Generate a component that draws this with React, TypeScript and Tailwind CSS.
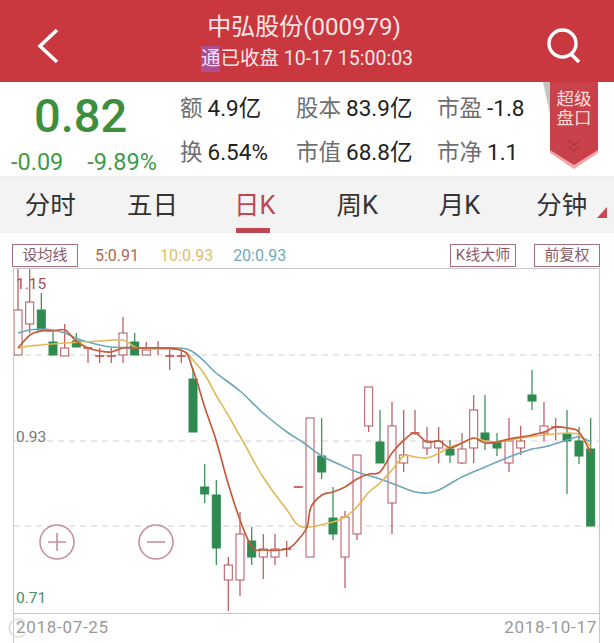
import React from 'react';

type Candle = [x: number, wickTop: number, wickBottom: number, bodyTop: number, bodyBottom: number, kind: 'up' | 'down'];

const candles: Candle[] = [
  [18, 268, 355, 310, 355, 'up'],
  [29.7, 268, 333, 302, 324, 'up'],
  [41.3, 293, 332, 310, 330, 'down'],
  [53, 332, 355, 342, 355, 'down'],
  [64.7, 324, 356, 348, 356, 'up'],
  [76.3, 333, 347, 341, 347, 'down'],
  [88, 347, 363, 348, 349, 'up'],
  [99.7, 348, 363, 356, 357, 'up'],
  [111.3, 348, 363, 356, 357, 'up'],
  [123, 317, 363, 333, 355, 'up'],
  [134.7, 333, 355, 342, 355, 'down'],
  [146.3, 342, 355, 350, 355, 'up'],
  [158, 341, 355, 348, 349, 'up'],
  [169.7, 348, 370, 356, 357, 'up'],
  [181.3, 350, 363, 356, 357, 'up'],
  [193, 368, 432, 379, 432, 'down'],
  [204.7, 464, 503, 487, 494, 'down'],
  [216.3, 480, 565, 495, 548, 'down'],
  [228.3, 557, 611, 565, 580, 'up'],
  [240, 512, 596, 534, 580, 'up'],
  [251.7, 527, 565, 541, 557, 'down'],
  [263.3, 534, 579, 549, 557, 'up'],
  [275, 534, 565, 549, 557, 'up'],
  [286.7, 541, 557, 549, 550, 'up'],
  [298.3, 487, 488, 487, 488, 'up'],
  [310, 418, 557, 418, 557, 'up'],
  [321.7, 418, 479, 456, 472, 'down'],
  [333, 487, 540, 518, 534, 'down'],
  [345, 511, 588, 517, 557, 'up'],
  [357, 455, 540, 455, 534, 'up'],
  [368.7, 387, 432, 387, 426, 'up'],
  [380, 410, 463, 442, 463, 'down'],
  [392, 402, 534, 426, 503, 'up'],
  [403.7, 410, 472, 455, 463, 'up'],
  [415, 410, 435, 433, 434, 'up'],
  [427, 427, 455, 441, 448, 'up'],
  [438.7, 427, 463, 441, 448, 'up'],
  [450, 440, 463, 449, 455, 'down'],
  [462, 433, 464, 449, 463, 'up'],
  [473.7, 395, 463, 410, 448, 'up'],
  [485, 395, 450, 433, 440, 'down'],
  [497, 433, 456, 442, 448, 'down'],
  [509, 418, 472, 441, 463, 'up'],
  [520.7, 426, 455, 441, 448, 'up'],
  [532, 370, 410, 395, 401, 'down'],
  [544, 402, 441, 426, 433, 'up'],
  [555.7, 418, 440, 427, 428, 'up'],
  [567, 410, 494, 434, 441, 'down'],
  [579, 427, 464, 441, 456, 'down'],
  [590.7, 418, 526, 449, 526, 'down'],
];

const ma5 =
  '18,348 30,335 41,331 53,331 65,330 76,341 88,348 100,351 111,352 123,348 135,348 181,350 193,370 205,408 216,440 228,483 240,520 252,547 263,550 287,549 298,540 307,527 311,507 322,495 333,492 345,487 357,479 369,474 380,472 392,453 404,440 415,433 427,442 439,441 450,448 462,443 474,438 485,443 497,442 509,439 521,437 532,435 544,432 556,427 567,428 579,432 591,453';
const ma10 =
  '18,348 30,346 41,345 65,343 100,341 123,340 135,347 147,349 181,350 193,360 205,375 216,395 228,415 245,445 263,477 287,510 302,527 333,522 345,517 357,507 369,492 380,483 392,470 404,456 415,457 427,458 439,453 450,447 462,443 474,438 485,441 497,442 521,438 544,435 567,433 579,435 591,447';
const ma20 =
  '18,333 30,330 41,329 53,330 65,333 76,338 88,342 111,347 146,348 181,348 193,352 205,362 216,373 240,391 263,413 287,432 304,443 322,456 345,467 357,472 380,479 404,488 415,492 427,493 439,490 462,477 485,467 509,457 532,449 544,447 567,440 579,437 591,442';

// catmull-rom through the sampled points, the averages are smooth in the app
const smooth = (points: string) => {
  const p = points.split(' ').map((s) => s.split(',').map(Number));
  let d = `M${p[0][0]} ${p[0][1]}`;
  for (let i = 0; i < p.length - 1; i++) {
    const a = p[Math.max(i - 1, 0)];
    const b = p[i];
    const c = p[i + 1];
    const e = p[Math.min(i + 2, p.length - 1)];
    const c1x = b[0] + (c[0] - a[0]) / 6;
    const c1y = b[1] + (c[1] - a[1]) / 6;
    const c2x = c[0] - (e[0] - b[0]) / 6;
    const c2y = c[1] - (e[1] - b[1]) / 6;
    d += ` C${c1x} ${c1y} ${c2x} ${c2y} ${c[0]} ${c[1]}`;
  }
  return d;
};

const wickUp = '#b5545c';
const bodyDown = '#2f8a4f';

const stats = [
  [['额', '4.9亿'], ['股本', '83.9亿'], ['市盈', '-1.8']],
  [['换', '6.54%'], ['市值', '68.8亿'], ['市净', '1.1']],
];

const tabs = ['分时', '五日', '日K', '周K', '月K', '分钟'];

const Header = () => (
  <header className="relative flex h-[82px] flex-col items-center bg-[#c9373f] text-white">
    <svg className="absolute left-[36px] top-[27px]" width="25" height="38" viewBox="0 0 25 38" fill="none">
      <path d="M21 3 L4 19 L21 35" stroke="#fff" strokeWidth="3.6" />
    </svg>
    <div className="mt-[12px] pr-[6px] text-[24px] leading-[30px] text-[#f6e6e6]">中弘股份(000979)</div>
    <div className="mt-[4px] flex items-center text-[19.5px] leading-[26px] text-[#f6e6e6]">
      <span className="bg-[#9a5fc4]/60 text-[#f0e0ff]">通</span>
      <span>已收盘 10-17 15:00:03</span>
    </div>
    <svg className="absolute left-[544px] top-[26px]" width="40" height="40" viewBox="0 0 40 40" fill="none">
      <circle cx="18.5" cy="17.5" r="13.5" stroke="#fff" strokeWidth="3.4" />
      <path d="M27 28 L35 36" stroke="#fff" strokeWidth="3.8" />
    </svg>
  </header>
);

const Ribbon = () => (
  <div className="absolute left-[543px] top-0 h-[88px] w-[56px]">
    <svg className="absolute inset-0" width="56" height="88" viewBox="0 0 56 88">
      <path d="M0 0 L7 0 L7 32 Z" fill="#c4c4c4" />
      <path d="M7 0 L55 0 L55 71 L31 87 L7 71 Z" fill="#f2a5a5" />
      <path d="M7 0 L55 0 L55 68 L31 83 L7 68 Z" fill="#c9414a" />
      <path d="M25 58 L31 63 L37 58 M25 64 L31 69 L37 64" stroke="#a93a42" strokeWidth="1.4" fill="none" />
    </svg>
    <div className="absolute left-[7px] top-[8px] w-[48px] text-center text-[17.5px] leading-[19px] text-[#f8dcdc]">
      <div>超级</div>
      <div>盘口</div>
    </div>
  </div>
);

const Stats = () => (
  <section className="relative flex h-[94px] bg-white">
    <div className="flex w-[180px] flex-col">
      <div className="mt-[6px] pl-[34px] text-[47px] font-medium leading-[56px] text-[#3d8f3d]">0.82</div>
      <div className="mt-[5px] flex gap-[24px] pl-[11px] text-[23.5px] leading-[26px] text-[#3f9a4a]">
        <span>-0.09</span>
        <span>-9.89%</span>
      </div>
    </div>
    <div className="flex flex-col gap-[14px] pt-[11px]">
      {stats.map((row) => (
        <div key={row[0][0]} className="flex h-[30px] items-center text-[22.5px] leading-[30px]">
          {row.map(([label, value], i) => (
            <div key={label} className={i === 0 ? 'w-[116px]' : i === 1 ? 'w-[141px]' : 'w-[90px]'}>
              <span className="text-[#6f6f6f]">{label}</span>
              <span className="ml-[5px] text-[22.5px] text-[#222]">{value}</span>
            </div>
          ))}
        </div>
      ))}
    </div>
    <Ribbon />
  </section>
);

const Tabs = () => (
  <nav className="relative grid h-[57px] grid-cols-6 border-t border-[#ededed] bg-[#f3f3f3]">
    {tabs.map((tab) => {
      const active = tab === '日K';
      return (
        <div key={tab} className="relative flex items-start justify-center pt-[11px] pr-[2px]">
          <span className={`text-[25.5px] leading-[34px] ${active ? 'text-[#c0474f]' : 'text-[#333]'}`}>{tab}</span>
          {active && <span className="absolute bottom-0 left-[31px] h-[5px] w-[34px] bg-[#c0474f]" />}
        </div>
      );
    })}
    <svg className="absolute left-[596px] top-[30px]" width="12" height="11" viewBox="0 0 12 11">
      <path d="M1 11 L11 0 L11 11 Z" fill="#c9474f" />
    </svg>
  </nav>
);

const ToolButton = ({ label, className = '' }: { label: string; className?: string }) => (
  <div
    className={`flex h-[23px] w-[66px] items-center justify-center border border-[#a8707f] text-[15px] leading-none text-[#8a5a68] ${className}`}
  >
    {label}
  </div>
);

const Toolbar = () => (
  <div className="flex h-[35px] items-start bg-white pl-[12px] pt-[11px]">
    <ToolButton label="设均线" />
    <div className="flex h-[23px] items-center text-[16px]">
      <span className="ml-[17px] text-[#b0674f]">5:0.91</span>
      <span className="ml-[21px] text-[#dcc06a]">10:0.93</span>
      <span className="ml-[20px] text-[#6fa9bd]">20:0.93</span>
    </div>
    <ToolButton label="K线大师" className="ml-auto" />
    <ToolButton label="前复权" className="ml-[18px] mr-[14px]" />
  </div>
);

const ZoomButton = ({ minus = false }: { minus?: boolean }) => (
  <svg width="36" height="36" viewBox="0 0 36 36" fill="none" stroke="#c98f9c" strokeWidth="1.6">
    <circle cx="18" cy="18" r="17" />
    <path d={minus ? 'M9 18 H27' : 'M9 18 H27 M18 9 V27'} />
  </svg>
);

const KChart = () => (
  <svg className="block" width="585" height="344" viewBox="14 269 585 344" fill="none">
    {[355, 441, 526].map((y) => (
      <line key={y} x1="14" x2="599" y1={y} y2={y} stroke="#d4d0d0" strokeWidth="1" strokeDasharray="6 5" />
    ))}
    {candles.map(([x, wickTop, wickBottom, bodyTop, bodyBottom, kind]) => {
      const up = kind === 'up';
      const color = up ? wickUp : bodyDown;
      const dash = bodyBottom - bodyTop <= 1;
      return (
        <g key={x}>
          <line x1={x} x2={x} y1={wickTop} y2={wickBottom} stroke={color} strokeWidth="1.2" />
          {dash ? (
            <line x1={x - 4.5} x2={x + 4.5} y1={bodyTop} y2={bodyTop} stroke="#c9483f" strokeWidth="1.6" />
          ) : (
            <rect
              x={x - 4}
              y={bodyTop}
              width="8"
              height={bodyBottom - bodyTop}
              fill={up ? '#fff' : bodyDown}
              stroke={color}
              strokeWidth="1"
            />
          )}
        </g>
      );
    })}
    <path d={smooth(ma20)} stroke="#6ba6bd" strokeWidth="1.6" />
    <path d={smooth(ma10)} stroke="#e0ba55" strokeWidth="1.6" />
    <path d={smooth(ma5)} stroke="#c45c3c" strokeWidth="1.7" />
  </svg>
);

const Chart = () => (
  <section className="relative ml-[13px] mr-[14px] h-[375px] border-x border-t border-[#c9c7cc] bg-white">
    <KChart />
    <div className="h-px bg-[#c9c7cc]" />
    <span className="absolute left-[2px] top-[6px] text-[15.5px] leading-[18px] text-[#a5505a]">1.15</span>
    <span className="absolute left-[2px] top-[159px] text-[15.5px] leading-[18px] text-[#777]">0.93</span>
    <span className="absolute left-[2px] top-[320px] text-[15.5px] leading-[18px] text-[#4d8a68]">0.71</span>
    <div className="absolute left-[25px] top-[255px]">
      <ZoomButton />
    </div>
    <div className="absolute left-[124px] top-[255px]">
      <ZoomButton minus />
    </div>
    <div className="flex justify-between px-[2px] pt-[2px] text-[17px] leading-[22px] tracking-[0.7px] text-[#999]">
      <span>2018-07-25</span>
      <span>2018-10-17</span>
    </div>
    {/* faint watermark over the date */}
    <svg className="absolute -left-[7px] top-[347px]" width="24" height="24" viewBox="0 0 24 24" fill="none">
      <path d="M18 6 A9 9 0 1 0 18 18" stroke="#e2e2e2" strokeWidth="2" />
    </svg>
  </section>
);

export default function App() {
  return (
    <div className="h-[643px] w-[614px] overflow-hidden bg-white font-['Roboto','Noto_Sans_CJK_SC',sans-serif]">
      <Header />
      <Stats />
      <Tabs />
      <Toolbar />
      <Chart />
    </div>
  );
}
